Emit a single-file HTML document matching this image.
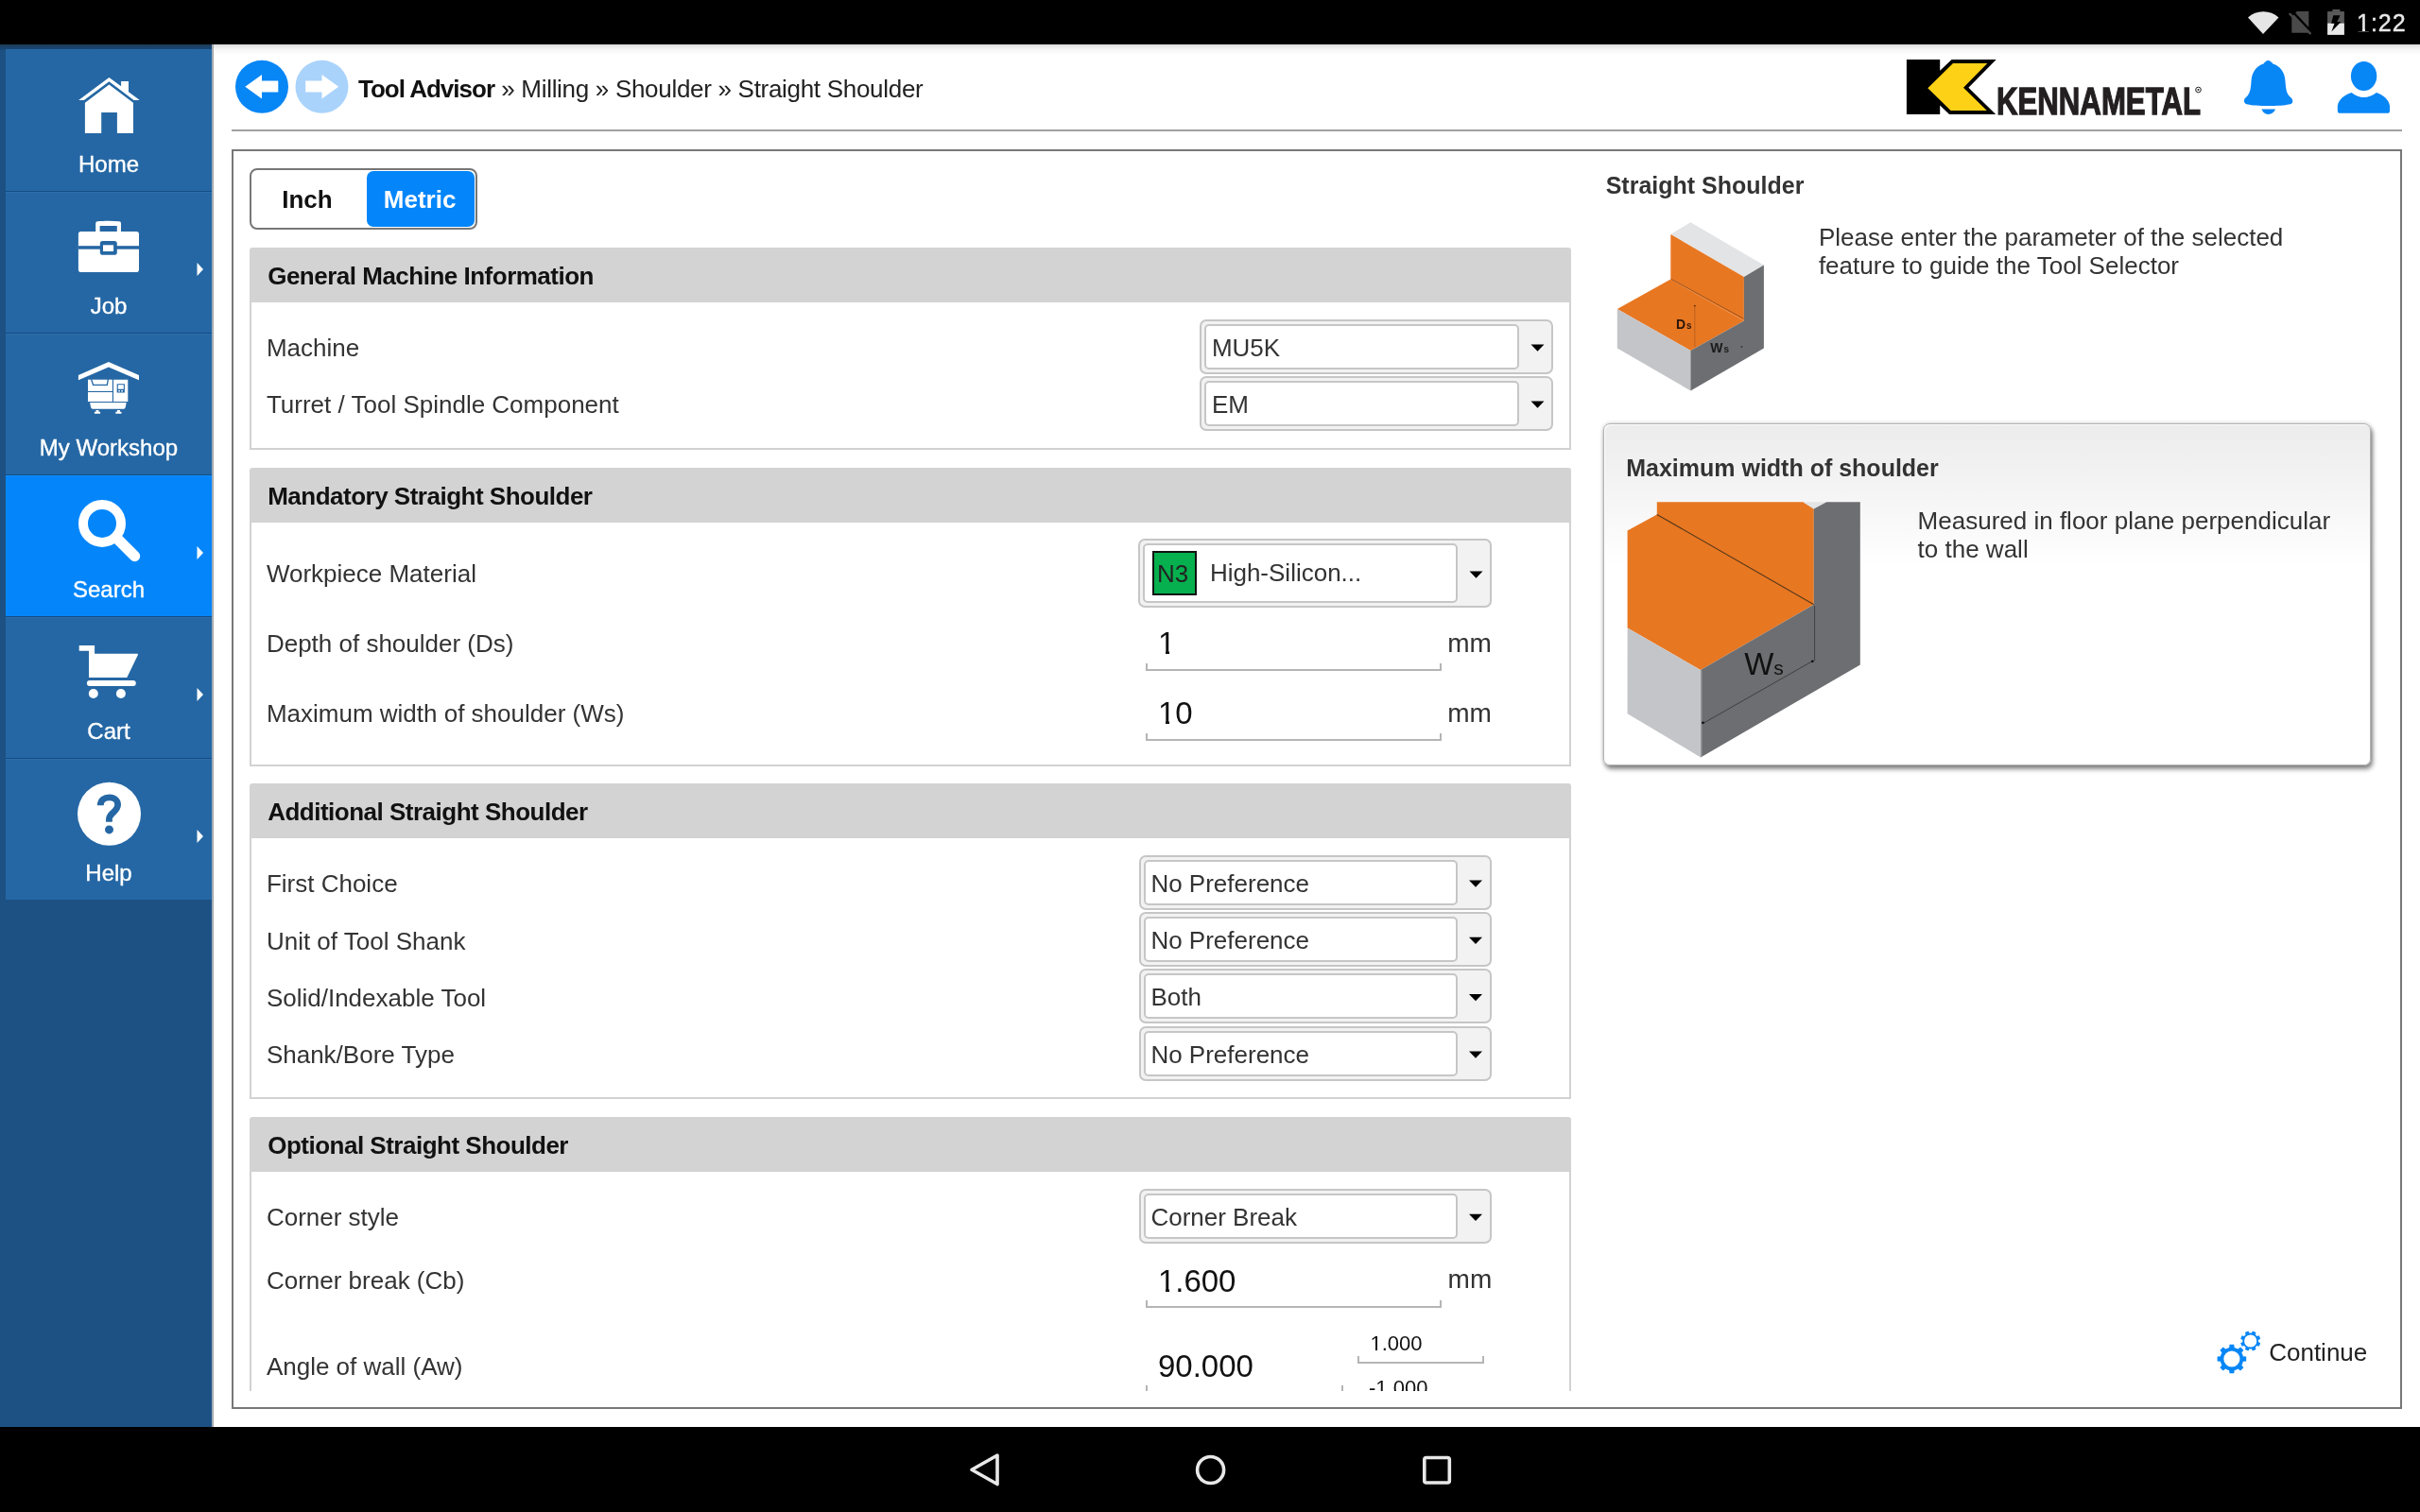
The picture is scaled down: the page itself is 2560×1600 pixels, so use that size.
<!DOCTYPE html>
<html><head><meta charset="utf-8"><style>
html,body{margin:0;padding:0;width:2560px;height:1600px;overflow:hidden;background:#fff;position:relative}
#root{position:absolute;left:0;top:0;width:2560px;height:1600px;will-change:transform}
.t{position:absolute;white-space:nowrap;font-family:"Liberation Sans", sans-serif}
.b{position:absolute}
.one{position:relative}
.one::before,.one::after{content:'';position:absolute;bottom:0.195em;height:0.115em;background:var(--bg,#fff)}
.one::before{left:0.03em;width:0.215em}
.one::after{left:0.352em;width:0.2em}
svg.b{z-index:1}
.t{z-index:2}
</style></head><body><div id="root">
<div class="b" style="left:0px;top:0px;width:2560px;height:47px;background:#000"></div><div class="b" style="left:0px;top:1510px;width:2560px;height:90px;background:#000"></div><div class="t" style="left:2493.0px;top:11.5px;font-size:25px;line-height:25px;font-weight:400;color:#e8e8e8;letter-spacing:1px;-webkit-text-stroke:0.4px #e8e8e8;"><span class="one" style="--bg:#000">1</span>:22</div><div class="b" style="left:0px;top:47px;width:224px;height:1463px;background:#1d5183"></div><div class="b" style="left:0px;top:47px;width:224px;height:6px;background:linear-gradient(#1f3a58,#174a7c)"></div><div class="b" style="left:224px;top:47px;width:1px;height:1463px;background:#9fb0c0"></div><div class="b" style="left:225px;top:47px;width:1px;height:1463px;background:#a6a6a6"></div><div class="b" style="left:6px;top:52px;width:218px;height:150px;background:#2567a4"></div><div class="t" style="left:6px;width:218px;text-align:center;top:161.7px;font-size:24px;line-height:24px;color:#fff;-webkit-text-stroke:0.35px #fff">Home</div><div class="b" style="left:6px;top:202px;width:218px;height:150px;background:#2567a4"></div><div class="t" style="left:6px;width:218px;text-align:center;top:311.7px;font-size:24px;line-height:24px;color:#fff;-webkit-text-stroke:0.35px #fff">Job</div><div class="b" style="left:6px;top:352px;width:218px;height:150px;background:#2567a4"></div><div class="t" style="left:6px;width:218px;text-align:center;top:461.7px;font-size:24px;line-height:24px;color:#fff;-webkit-text-stroke:0.35px #fff">My Workshop</div><div class="b" style="left:6px;top:502px;width:218px;height:150px;background:#0486fa"></div><div class="t" style="left:6px;width:218px;text-align:center;top:611.7px;font-size:24px;line-height:24px;color:#fff;-webkit-text-stroke:0.35px #fff">Search</div><div class="b" style="left:6px;top:652px;width:218px;height:150px;background:#2567a4"></div><div class="t" style="left:6px;width:218px;text-align:center;top:761.7px;font-size:24px;line-height:24px;color:#fff;-webkit-text-stroke:0.35px #fff">Cart</div><div class="b" style="left:6px;top:802px;width:218px;height:150px;background:#2567a4"></div><div class="t" style="left:6px;width:218px;text-align:center;top:911.7px;font-size:24px;line-height:24px;color:#fff;-webkit-text-stroke:0.35px #fff">Help</div><div class="b" style="left:6px;top:202px;width:218px;height:1px;background:#124c86"></div><div class="b" style="left:6px;top:203px;width:218px;height:1px;background:rgba(255,255,255,0.05)"></div><div class="b" style="left:6px;top:352px;width:218px;height:1px;background:#124c86"></div><div class="b" style="left:6px;top:353px;width:218px;height:1px;background:rgba(255,255,255,0.05)"></div><div class="b" style="left:6px;top:502px;width:218px;height:1px;background:#124c86"></div><div class="b" style="left:6px;top:503px;width:218px;height:1px;background:rgba(255,255,255,0.05)"></div><div class="b" style="left:6px;top:652px;width:218px;height:1px;background:#124c86"></div><div class="b" style="left:6px;top:653px;width:218px;height:1px;background:rgba(255,255,255,0.05)"></div><div class="b" style="left:6px;top:802px;width:218px;height:1px;background:#124c86"></div><div class="b" style="left:6px;top:803px;width:218px;height:1px;background:rgba(255,255,255,0.05)"></div><div class="b" style="left:226px;top:47px;width:2334px;height:1463px;background:#fff"></div><div class="b" style="left:226px;top:47px;width:2334px;height:11px;background:linear-gradient(#dcdcdc,#f6f6f6 50%,#fff)"></div><div class="t" style="left:379px;top:80.5px;font-size:26px;line-height:26px;color:#222"><b style="color:#111;letter-spacing:-1px">Tool Advisor</b> <span style="letter-spacing:-0.3px">» Milling » Shoulder » Straight Shoulder</span></div><div class="t" style="left:2112px;top:86.7px;font-size:40.5px;line-height:40.5px;font-weight:700;color:#231f20;-webkit-text-stroke:1.3px #231f20;transform:scaleX(0.77);transform-origin:0 0">KENNAMETAL</div><div class="b" style="left:245px;top:137px;width:2296px;height:2px;background:#a0a0a0"></div><div class="b" style="left:245px;top:158px;width:2296px;height:1333px;border:2px solid #777;box-sizing:border-box"></div><div class="b" style="left:264px;top:177.5px;width:241px;height:65.0px;border:2px solid #777;border-radius:8px;box-sizing:border-box;background:#fff"></div><div class="b" style="left:388px;top:180.5px;width:114px;height:59.0px;background:#0486fa;border-radius:7px"></div><div class="t" style="left:298.2px;top:198.0px;font-size:26px;line-height:26px;font-weight:700;color:#111;">Inch</div><div class="t" style="left:405.8px;top:198.0px;font-size:26px;line-height:26px;font-weight:700;color:#fff;">Metric</div><div class="b" style="left:0;top:0;width:2560px;height:1472px;overflow:hidden"><div class="b" style="left:264px;top:262px;width:1398px;height:58px;background:#d3d3d3;border-radius:3px 3px 0 0"></div><div class="t" style="left:283.2px;top:278.8px;font-size:26px;line-height:26px;font-weight:700;color:#111;letter-spacing:-0.5px;">General Machine Information</div><div class="b" style="left:264px;top:320px;width:1398px;height:156px;border:2px solid #d2d2d2;border-top:0;box-sizing:border-box"></div><div class="t" style="left:281.9px;top:355.0px;font-size:26px;line-height:26px;font-weight:400;color:#333;">Machine</div><div class="t" style="left:281.9px;top:415.0px;font-size:26px;line-height:26px;font-weight:400;color:#333;">Turret / Tool Spindle Component</div><div class="b" style="left:1269px;top:337.5px;width:374px;height:58.0px;background:#f2f2f2;border:2px solid #c6c6c6;border-radius:7px;box-sizing:border-box"></div><div class="b" style="left:1274px;top:342.5px;width:333px;height:48.0px;background:#fff;border:2px solid #c6c6c6;border-radius:5px;box-sizing:border-box"></div><div class="t" style="left:1281.9px;top:354.8px;font-size:26px;line-height:26px;font-weight:400;color:#333;">MU5K</div><div class="b" style="left:1269px;top:397.5px;width:374px;height:58.0px;background:#f2f2f2;border:2px solid #c6c6c6;border-radius:7px;box-sizing:border-box"></div><div class="b" style="left:1274px;top:402.5px;width:333px;height:48.0px;background:#fff;border:2px solid #c6c6c6;border-radius:5px;box-sizing:border-box"></div><div class="t" style="left:1281.9px;top:414.8px;font-size:26px;line-height:26px;font-weight:400;color:#333;">EM</div><div class="b" style="left:264px;top:495px;width:1398px;height:58px;background:#d3d3d3;border-radius:3px 3px 0 0"></div><div class="t" style="left:283.2px;top:511.8px;font-size:26px;line-height:26px;font-weight:700;color:#111;letter-spacing:-0.5px;">Mandatory Straight Shoulder</div><div class="b" style="left:264px;top:553px;width:1398px;height:258px;border:2px solid #d2d2d2;border-top:0;box-sizing:border-box"></div><div class="t" style="left:281.9px;top:594.0px;font-size:26px;line-height:26px;font-weight:400;color:#333;">Workpiece Material</div><div class="t" style="left:281.9px;top:668.0px;font-size:26px;line-height:26px;font-weight:400;color:#333;">Depth of shoulder (Ds)</div><div class="t" style="left:281.9px;top:742.4px;font-size:26px;line-height:26px;font-weight:400;color:#333;">Maximum width of shoulder (Ws)</div><div class="b" style="left:1204px;top:570px;width:374px;height:73px;background:#f2f2f2;border:2px solid #c6c6c6;border-radius:7px;box-sizing:border-box"></div><div class="b" style="left:1209px;top:575px;width:333px;height:63px;background:#fff;border:2px solid #c6c6c6;border-radius:5px;box-sizing:border-box"></div><div class="b" style="left:1219px;top:582.5px;width:47px;height:47.0px;background:#06b04e;border:2px solid #111;box-sizing:border-box"></div><div class="t" style="left:1223.9px;top:594.0px;font-size:26px;line-height:26px;font-weight:400;color:#222;">N3</div><div class="t" style="left:1279.9px;top:592.5px;font-size:26px;line-height:26px;font-weight:400;color:#333;">High-Silicon...</div><div class="b" style="left:1211.5px;top:707.5px;width:313.0px;height:2.0px;background:#b5b5b5"></div><div class="b" style="left:1211.5px;top:701.5px;width:2.0px;height:8.0px;background:#b5b5b5"></div><div class="b" style="left:1522.5px;top:701.5px;width:2.0px;height:8.0px;background:#b5b5b5"></div><div class="t" style="left:1224.9px;top:664.1px;font-size:33px;line-height:33px;font-weight:400;color:#111;"><span class="one" style="--bg:#fff">1</span></div><div class="t" style="left:1531.3px;top:666.6px;font-size:28px;line-height:28px;font-weight:400;color:#333;">mm</div><div class="b" style="left:1211.5px;top:781.5px;width:313.0px;height:2.0px;background:#b5b5b5"></div><div class="b" style="left:1211.5px;top:775.5px;width:2.0px;height:8.0px;background:#b5b5b5"></div><div class="b" style="left:1522.5px;top:775.5px;width:2.0px;height:8.0px;background:#b5b5b5"></div><div class="t" style="left:1224.9px;top:738.1px;font-size:33px;line-height:33px;font-weight:400;color:#111;"><span class="one" style="--bg:#fff">1</span>0</div><div class="t" style="left:1531.3px;top:740.8px;font-size:28px;line-height:28px;font-weight:400;color:#333;">mm</div><div class="b" style="left:264px;top:829px;width:1398px;height:58px;background:#d3d3d3;border-radius:3px 3px 0 0"></div><div class="t" style="left:283.2px;top:845.8px;font-size:26px;line-height:26px;font-weight:700;color:#111;letter-spacing:-0.5px;">Additional Straight Shoulder</div><div class="b" style="left:264px;top:887px;width:1398px;height:276px;border:2px solid #d2d2d2;border-top:0;box-sizing:border-box"></div><div class="b" style="left:1204.5px;top:904.5px;width:373.0px;height:58.0px;background:#f2f2f2;border:2px solid #c6c6c6;border-radius:7px;box-sizing:border-box"></div><div class="b" style="left:1209.5px;top:909.5px;width:332.0px;height:48.0px;background:#fff;border:2px solid #c6c6c6;border-radius:5px;box-sizing:border-box"></div><div class="t" style="left:1217.4px;top:921.8px;font-size:26px;line-height:26px;font-weight:400;color:#333;">No Preference</div><div class="t" style="left:281.9px;top:922.2px;font-size:26px;line-height:26px;font-weight:400;color:#333;">First Choice</div><div class="b" style="left:1204.5px;top:964.8px;width:373.0px;height:58.0px;background:#f2f2f2;border:2px solid #c6c6c6;border-radius:7px;box-sizing:border-box"></div><div class="b" style="left:1209.5px;top:969.8px;width:332.0px;height:48.0px;background:#fff;border:2px solid #c6c6c6;border-radius:5px;box-sizing:border-box"></div><div class="t" style="left:1217.4px;top:982.1px;font-size:26px;line-height:26px;font-weight:400;color:#333;">No Preference</div><div class="t" style="left:281.9px;top:982.5px;font-size:26px;line-height:26px;font-weight:400;color:#333;">Unit of Tool Shank</div><div class="b" style="left:1204.5px;top:1025px;width:373.0px;height:58px;background:#f2f2f2;border:2px solid #c6c6c6;border-radius:7px;box-sizing:border-box"></div><div class="b" style="left:1209.5px;top:1030px;width:332.0px;height:48px;background:#fff;border:2px solid #c6c6c6;border-radius:5px;box-sizing:border-box"></div><div class="t" style="left:1217.4px;top:1042.3px;font-size:26px;line-height:26px;font-weight:400;color:#333;">Both</div><div class="t" style="left:281.9px;top:1042.7px;font-size:26px;line-height:26px;font-weight:400;color:#333;">Solid/Indexable Tool</div><div class="b" style="left:1204.5px;top:1085.5px;width:373.0px;height:58.0px;background:#f2f2f2;border:2px solid #c6c6c6;border-radius:7px;box-sizing:border-box"></div><div class="b" style="left:1209.5px;top:1090.5px;width:332.0px;height:48.0px;background:#fff;border:2px solid #c6c6c6;border-radius:5px;box-sizing:border-box"></div><div class="t" style="left:1217.4px;top:1102.8px;font-size:26px;line-height:26px;font-weight:400;color:#333;">No Preference</div><div class="t" style="left:281.9px;top:1103.2px;font-size:26px;line-height:26px;font-weight:400;color:#333;">Shank/Bore Type</div><div class="b" style="left:264px;top:1182px;width:1398px;height:58px;background:#d3d3d3;border-radius:3px 3px 0 0"></div><div class="t" style="left:283.2px;top:1198.8px;font-size:26px;line-height:26px;font-weight:700;color:#111;letter-spacing:-0.5px;">Optional Straight Shoulder</div><div class="b" style="left:264px;top:1240px;width:1398px;height:360px;border:2px solid #d2d2d2;border-top:0;box-sizing:border-box"></div><div class="t" style="left:281.9px;top:1275.0px;font-size:26px;line-height:26px;font-weight:400;color:#333;">Corner style</div><div class="t" style="left:281.9px;top:1341.8px;font-size:26px;line-height:26px;font-weight:400;color:#333;">Corner break (Cb)</div><div class="t" style="left:281.9px;top:1432.8px;font-size:26px;line-height:26px;font-weight:400;color:#333;">Angle of wall (Aw)</div><div class="b" style="left:1204.5px;top:1257.5px;width:373.0px;height:58.5px;background:#f2f2f2;border:2px solid #c6c6c6;border-radius:7px;box-sizing:border-box"></div><div class="b" style="left:1209.5px;top:1262.5px;width:332.0px;height:48.5px;background:#fff;border:2px solid #c6c6c6;border-radius:5px;box-sizing:border-box"></div><div class="t" style="left:1217.4px;top:1275.0px;font-size:26px;line-height:26px;font-weight:400;color:#333;">Corner Break</div><div class="b" style="left:1211.5px;top:1381.5px;width:313.0px;height:2.0px;background:#b5b5b5"></div><div class="b" style="left:1211.5px;top:1375.5px;width:2.0px;height:8.0px;background:#b5b5b5"></div><div class="b" style="left:1522.5px;top:1375.5px;width:2.0px;height:8.0px;background:#b5b5b5"></div><div class="t" style="left:1224.9px;top:1338.5px;font-size:33px;line-height:33px;font-weight:400;color:#111;"><span class="one" style="--bg:#fff">1</span>.600</div><div class="t" style="left:1531.6px;top:1340.1px;font-size:28px;line-height:28px;font-weight:400;color:#333;">mm</div><div class="t" style="left:1225.0px;top:1429.1px;font-size:33px;line-height:33px;font-weight:400;color:#111;">90.000</div><div class="b" style="left:1211.5px;top:1466px;width:2.0px;height:14px;background:#b5b5b5"></div><div class="b" style="left:1418.5px;top:1466px;width:2.0px;height:14px;background:#b5b5b5"></div><div class="t" style="left:1449.5px;top:1410.6px;font-size:22px;line-height:22px;font-weight:400;color:#111;"><span class="one" style="--bg:#fff">1</span>.000</div><div class="b" style="left:1436px;top:1441px;width:134px;height:2px;background:#b5b5b5"></div><div class="b" style="left:1436px;top:1435px;width:2px;height:8px;background:#b5b5b5"></div><div class="b" style="left:1568px;top:1435px;width:2px;height:8px;background:#b5b5b5"></div><div class="t" style="left:1448.0px;top:1457.9px;font-size:22px;line-height:22px;font-weight:400;color:#111;">-<span class="one" style="--bg:#fff">1</span>.000</div></div><div class="t" style="left:1698.7px;top:184.0px;font-size:25px;line-height:25px;font-weight:700;color:#333;">Straight Shoulder</div><div class="t" style="left:1923.9px;top:238.0px;font-size:26px;line-height:26px;font-weight:400;color:#333;">Please enter the parameter of the selected</div><div class="t" style="left:1923.9px;top:268.0px;font-size:26px;line-height:26px;font-weight:400;color:#333;">feature to guide the Tool Selector</div><div class="b" style="left:1696px;top:448px;width:812px;height:362px;border:1.5px solid #b2b2b2;border-radius:7px;box-sizing:border-box;background:linear-gradient(#ececec 0px,#f3f3f3 60px,#fff 150px);box-shadow:0 0 4px rgba(0,0,0,0.22),2px 4px 5px rgba(0,0,0,0.45),inset 1px 1px 0 #fff"></div><div class="t" style="left:1720.2px;top:483.4px;font-size:25px;line-height:25px;font-weight:700;color:#333;">Maximum width of shoulder</div><div class="t" style="left:2028.6px;top:537.7px;font-size:26px;line-height:26px;font-weight:400;color:#333;">Measured in floor plane perpendicular</div><div class="t" style="left:2028.6px;top:568.0px;font-size:26px;line-height:26px;font-weight:400;color:#333;">to the wall</div><div class="t" style="left:2400.2px;top:1417.8px;font-size:26px;line-height:26px;font-weight:400;color:#222;">Continue</div><div class="t" style="left:1773.1px;top:335.6px;font-size:14px;line-height:14px;font-weight:700;color:#2a1608;">D</div><div class="t" style="left:1783.9px;top:339.5px;font-size:10px;line-height:10px;font-weight:700;color:#2a1608;">s</div><div class="t" style="left:1809.2px;top:360.7px;font-size:14px;line-height:14px;font-weight:700;color:#1a1a1a;">W</div><div class="t" style="left:1823.5px;top:364.5px;font-size:10px;line-height:10px;font-weight:700;color:#1a1a1a;">s</div><div class="t" style="left:1845.3px;top:685.6px;font-size:33px;line-height:33px;font-weight:400;color:#111;">W</div><div class="t" style="left:1876.3px;top:695.7px;font-size:21px;line-height:21px;font-weight:400;color:#111;">s</div>
<svg class="b" style="left:0;top:0" width="2560" height="1600" viewBox="0 0 2560 1600"><path d="M2394,36 L2378,18.5 A24,24 0 0 1 2410.5,18.5 Z" fill="#e6e6e6"/><path d="M2429.9,12.1 L2442.3,12.1 L2442.3,34.7 L2424.3,34.7 L2424.3,18 Z" fill="#4a4a4a"/><line x1="2422.4" y1="14.9" x2="2443.8" y2="35.4" stroke="#4a4a4a" stroke-width="2.4" stroke-linecap="round"/><line x1="2425.5" y1="12.6" x2="2443" y2="31.3" stroke="#000" stroke-width="2.3"/><rect x="2467.4" y="10" width="8" height="2.3" fill="#5a5a5a"/><rect x="2462.1" y="12.1" width="17.8" height="12.4" fill="#5a5a5a"/><rect x="2462.1" y="24.5" width="17.8" height="12.4" fill="#e8e8e8"/><path d="M2468.3,16.3 L2475.6,16.3 L2472.3,23 L2476.5,23 L2466.4,33.5 L2469.5,24.8 L2466.1,24.8 Z" fill="#000"/><path d="M1055,1540 L1028,1555.3 L1055,1570.5 Z" fill="none" stroke="#e8e8e8" stroke-width="3.6" stroke-linejoin="round"/><circle cx="1280.6" cy="1555.5" r="14" fill="none" stroke="#e8e8e8" stroke-width="3.6"/><rect x="1506.8" y="1542.5" width="26.5" height="26.5" rx="2" fill="none" stroke="#e8e8e8" stroke-width="3.6"/><path d="M208.5,278 L215,285 L208.5,292 Z" fill="#fff"/><path d="M208.5,578 L215,585 L208.5,592 Z" fill="#fff"/><path d="M208.5,728 L215,735 L208.5,742 Z" fill="#fff"/><path d="M208.5,878 L215,885 L208.5,892 Z" fill="#fff"/><path d="M83.2,106 L115.4,81.9 L128.1,91.3 L128.1,85.9 L136,85.9 L136,97.2 L147.2,105.5 L147.2,106 L141.5,106 L115.4,86.2 L88.9,106 Z" fill="#fff"/><path d="M89.9,108.7 L115.4,89.4 L141,108.7 L141,141 L123.9,141 L123.9,118.9 L107.2,118.9 L107.2,141 L89.9,141 Z" fill="#fff"/><path fill="#fff" fill-rule="evenodd" d="M103.2,234.3 C110,233.6 119,233.6 126,234.3 a2,2 0 0 1 2,2 v9 h-4.2 v-6.4 h-18.2 v6.4 h-4.4 v-9 a2,2 0 0 1 2,-2 Z"/><rect x="82.9" y="244.9" width="64.1" height="43.1" rx="2.8" fill="#fff"/><rect x="82.9" y="260.2" width="64.1" height="3.5" fill="#2567a4"/><rect x="105.8" y="255.1" width="18" height="14.6" rx="2.8" fill="#2567a4"/><rect x="109" y="259.3" width="11.1" height="6.7" fill="#fff"/><path fill="#fff" d="M82.9,397 L114.9,383 L147,397 L147,402.3 L114.9,388.5 L82.9,402.3 Z"/><path fill="#fff" d="M93,401.7 h25.9 v12.2 h-25.9 Z"/><path d="M96.5,401.2 L98.6,407.3 L113.3,407.3 L114.4,401.2" fill="none" stroke="#2567a4" stroke-width="1.3"/><path fill="#fff" d="M93,415 h25.9 v10 h-25.9 Z"/><path fill="#fff" fill-rule="evenodd" d="M120,401.7 h15.3 v23.3 h-15.3 Z M123.7,406.2 v9.3 h8.2 v-9.3 Z"/><path fill="#fff" d="M124.8,407.2 h6 v4.6 h-6 Z M125.3,413 h1.6 v1.6 h-1.6 Z M128.3,413 h1.6 v1.6 h-1.6 Z"/><path fill="#fff" d="M95.1,426 h38.6 l-1,5 a2,2 0 0 1 -2,1.7 h-32.6 a2,2 0 0 1 -2,-1.7 Z"/><path fill="#fff" d="M101.5,434 h3 v1.8 h1.6 v1.9 h-6.2 v-1.9 h1.6 Z M123.9,434 h3 v1.8 h1.6 v1.9 h-6.2 v-1.9 h1.6 Z"/><circle cx="108" cy="553.9" r="20" fill="none" stroke="#fff" stroke-width="10"/><line x1="124" y1="570" x2="142.5" y2="588.5" stroke="#fff" stroke-width="11.4" stroke-linecap="round"/><path fill="#fff" d="M83.7,683 L100.1,683 L100.1,691.7 L145.2,691.7 Q146.3,691.8 145.9,693 L134.3,717.1 L94,717.1 L94,688.8 L83.7,688.8 Z"/><rect x="91.9" y="720" width="51.9" height="6.1" rx="3" fill="#fff"/><circle cx="98.8" cy="734" r="5" fill="#fff"/><circle cx="127.9" cy="734" r="5" fill="#fff"/><circle cx="115.5" cy="861.3" r="33.5" fill="#fff"/><path d="M106.3,852.3 C106.3,846.5 110.5,843.9 115.7,843.9 C121,843.9 124.6,847 124.6,851.5 C124.6,855.8 121.5,858 119,860.5 C116.5,863 115.45,864.5 115.45,866.5 L115.45,869.7" fill="none" stroke="#2567a4" stroke-width="6.8"/><circle cx="115.5" cy="877.9" r="4.5" fill="#2567a4"/><circle cx="277" cy="91.8" r="28" fill="#0786f6"/><path d="M259.3,91.8 L277,79 L277,85.6 L294.3,85.6 L294.3,97.6 L277,97.6 L277,104.5 Z" fill="#fff"/><circle cx="340.5" cy="91.8" r="28" fill="#a9d3fb"/><path d="M358.2,91.8 L340.5,79 L340.5,85.6 L323.2,85.6 L323.2,97.6 L340.5,97.6 L340.5,104.5 Z" fill="#fff"/><path d="M2016.9,62.9 L2052.2,62.9 L2052.2,74.8 L2064.6,62.9 L2111.7,62.9 L2082.4,92.7 L2111.2,121 L2062.1,121 L2052.2,111.5 L2052.2,121 L2016.9,121 Z" fill="#000"/><path d="M2066,66.9 L2102.3,66.9 L2077,92.7 L2101.8,117 L2063.6,117 L2039.3,93.2 Z" fill="#fcd116"/><circle cx="2325.5" cy="95" r="2.8" fill="none" stroke="#231f20" stroke-width="1"/><circle cx="2325.5" cy="95" r="1" fill="#231f20"/><path fill="#0786f6" d="M2399.4,64 C2397.5,64 2395.5,66 2394.5,67.5 C2387,70 2382,76 2381.5,86 C2381,94 2380,99 2377,102 C2375,104 2373.5,105 2374,107.5 C2374.5,109.5 2376,110.3 2378,110.5 C2385,112.5 2414,112.5 2421,110.5 C2423.5,110.3 2425,109.5 2425.3,107.5 C2425.5,105 2424,104 2422,102 C2419,99 2418,94 2417.5,86 C2417,76 2412,70 2404.3,67.5 C2403.3,66 2401.3,64 2399.4,64 Z"/><path fill="#0786f6" d="M2392.4,115.6 L2407.1,115.6 C2406,118.5 2403,120.9 2399.4,120.9 C2396,120.9 2393.5,118.5 2392.4,115.6 Z"/><ellipse cx="2500.6" cy="80.5" rx="13.7" ry="15.45" fill="#0786f6"/><path fill="#0786f6" d="M2487.6,98 C2492,101.5 2496,103 2500.6,103 C2505,103 2509.5,101.5 2513.9,98 C2521,100.5 2527,105 2528,112 L2528,117.5 C2528,119 2527,119.8 2525.5,119.8 L2475.5,119.8 C2474,119.8 2472.8,119 2472.8,117.5 L2472.8,112 C2474,105 2480,100.5 2487.6,98 Z"/><path d="M1619.5,364.5 L1633.5,364.5 L1626.5,371.8 Z" fill="#000"/><path d="M1619.5,424.5 L1633.5,424.5 L1626.5,431.8 Z" fill="#000"/><path d="M1554.5,604.5 L1568.5,604.5 L1561.5,611.8 Z" fill="#000"/><path d="M1554.0,931.5 L1568.0,931.5 L1561.0,938.8 Z" fill="#000"/><path d="M1554.0,991.8 L1568.0,991.8 L1561.0,999.0999999999999 Z" fill="#000"/><path d="M1554.0,1052.0 L1568.0,1052.0 L1561.0,1059.3 Z" fill="#000"/><path d="M1554.0,1112.5 L1568.0,1112.5 L1561.0,1119.8 Z" fill="#000"/><path d="M1554.0,1284.75 L1568.0,1284.75 L1561.0,1292.05 Z" fill="#000"/><path d="M1767.3,247.9 L1788.4,235.3 L1865.9,280.6 L1844.9,293.1 Z" fill="#e3e4e6"/><path d="M1767.3,247.9 L1844.9,293.1 L1844.9,339.6 L1767.3,295.6 Z" fill="#e87722"/><path d="M1710.8,327 L1767.3,295.6 L1844.9,339.6 L1788.4,371 Z" fill="#e87722"/><path d="M1710.8,327 L1788.4,371 L1788.4,413.4 L1710.8,368.5 Z" fill="#c4c5c8"/><path d="M1788.4,371 L1844.9,339.6 L1844.9,293.1 L1865.9,280.6 L1865.9,368.5 L1788.4,413.4 Z" fill="#6d6e71"/><path d="M1752.8,531.3 L1907.4,531.3 L1918.8,538.4 L1918.8,639.7 L1799,709 L1721.6,664.5 L1721.6,561.5 L1752.8,544.4 Z" fill="#e87722"/><path d="M1907.4,531.3 L1932.3,531.3 L1918.8,538.4 Z" fill="#e3e4e6"/><line x1="1752.8" y1="544.4" x2="1918.8" y2="639.7" stroke="#5a3a1a" stroke-width="1.2"/><path d="M1721.6,664.5 L1799,709 L1799,801.4 L1721.6,755.2 Z" fill="#c4c5c8"/><path d="M1799,709 L1918.8,639.7 L1918.8,538.4 L1932.3,531.3 L1967.8,531.3 L1967.8,703.6 L1799,801.4 Z" fill="#6d6e71"/><circle cx="2360.9" cy="1438" r="10.45" fill="none" stroke="#0786f6" stroke-width="3.70"/><polygon points="2372.20,1435.20 2376.20,1435.62 2376.20,1440.38 2372.20,1440.80" fill="#0786f6"/><polygon points="2370.87,1444.01 2373.40,1447.14 2370.04,1450.50 2366.91,1447.97" fill="#0786f6"/><polygon points="2363.70,1449.30 2363.28,1453.30 2358.52,1453.30 2358.10,1449.30" fill="#0786f6"/><polygon points="2354.89,1447.97 2351.76,1450.50 2348.40,1447.14 2350.93,1444.01" fill="#0786f6"/><polygon points="2349.60,1440.80 2345.60,1440.38 2345.60,1435.62 2349.60,1435.20" fill="#0786f6"/><polygon points="2350.93,1431.99 2348.40,1428.86 2351.76,1425.50 2354.89,1428.03" fill="#0786f6"/><polygon points="2358.10,1426.70 2358.52,1422.70 2363.28,1422.70 2363.70,1426.70" fill="#0786f6"/><polygon points="2366.91,1428.03 2370.04,1425.50 2373.40,1428.86 2370.87,1431.99" fill="#0786f6"/><circle cx="2380.7" cy="1419" r="7.50" fill="none" stroke="#0786f6" stroke-width="1.80"/><polygon points="2388.38,1419.80 2391.21,1421.33 2389.78,1424.78 2386.69,1423.86" fill="#0786f6"/><polygon points="2385.56,1424.99 2386.48,1428.08 2383.03,1429.51 2381.50,1426.68" fill="#0786f6"/><polygon points="2379.90,1426.68 2378.37,1429.51 2374.92,1428.08 2375.84,1424.99" fill="#0786f6"/><polygon points="2374.71,1423.86 2371.62,1424.78 2370.19,1421.33 2373.02,1419.80" fill="#0786f6"/><polygon points="2373.02,1418.20 2370.19,1416.67 2371.62,1413.22 2374.71,1414.14" fill="#0786f6"/><polygon points="2375.84,1413.01 2374.92,1409.92 2378.37,1408.49 2379.90,1411.32" fill="#0786f6"/><polygon points="2381.50,1411.32 2383.03,1408.49 2386.48,1409.92 2385.56,1413.01" fill="#0786f6"/><polygon points="2386.69,1414.14 2389.78,1413.22 2391.21,1416.67 2388.38,1418.20" fill="#0786f6"/><line x1="1767.7" y1="295.3" x2="1844.4" y2="337.2" stroke="#8a4a1a" stroke-width="0.8"/><line x1="1792.8" y1="323" x2="1792.8" y2="367" stroke="#a85a20" stroke-width="0.7"/><circle cx="1792.8" cy="323.6" r="0.9" fill="#5a2a10"/><circle cx="1842.5" cy="367" r="0.9" fill="#333"/><line x1="1919.6" y1="641" x2="1919.6" y2="699.4" stroke="#3a3a3c" stroke-width="0.9"/><line x1="1801.7" y1="765.4" x2="1917.7" y2="699.4" stroke="#3a3a3c" stroke-width="0.9"/><line x1="1799.8" y1="708.8" x2="1799.8" y2="801.2" stroke="#a9aaad" stroke-width="1"/><circle cx="1801.5" cy="764.8" r="1.4" fill="#111"/><circle cx="1917.3" cy="699.8" r="1.4" fill="#111"/></svg></div>
</body></html>
